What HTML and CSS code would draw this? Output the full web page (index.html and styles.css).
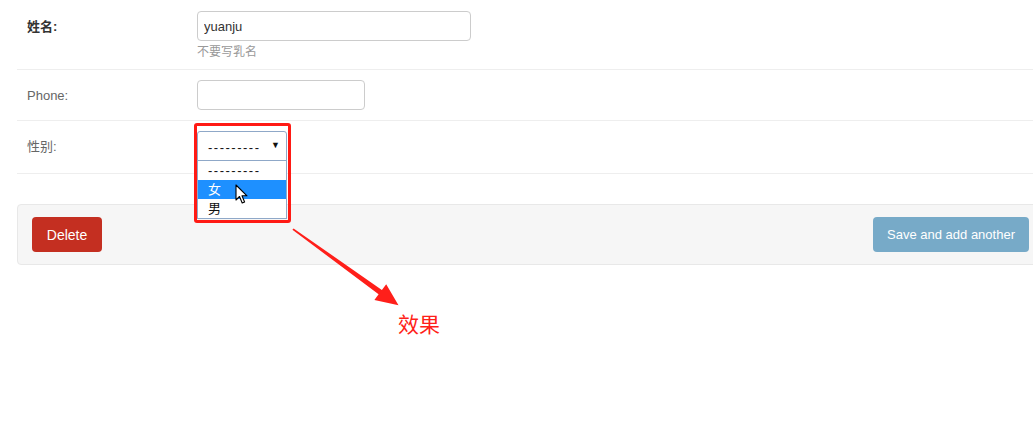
FILE: index.html
```html
<!DOCTYPE html>
<html lang="zh">
<head>
<meta charset="utf-8">
<title>Form</title>
<link rel="stylesheet" href="styles.css">
</head>
<body>
<div class="page">
  <form class="form">
    <div class="row row-first">
      <label class="label label-strong">姓名:</label>
      <div class="field">
        <input class="input input-wide" type="text" value="yuanju">
        <div class="help">不要写乳名</div>
      </div>
    </div>
    <div class="row">
      <label class="label">Phone:</label>
      <div class="field">
        <input class="input input-short" type="text" value="">
      </div>
    </div>
    <div class="row row-select">
      <label class="label">性别:</label>
      <div class="field">
        <div class="select">
          <div class="select-box">
            <span class="select-value">---------</span>
            <span class="select-caret">▼</span>
          </div>
          <ul class="select-list">
            <li class="option">---------</li>
            <li class="option option-active">女</li>
            <li class="option">男</li>
          </ul>
          <svg class="cursor" width="14" height="21" viewBox="0 0 14 21">
            <path d="M1 1 L1 16 L4.5 12.5 L7.2 19 L9.6 18 L7 11.8 L12 11.8 Z" fill="#fff" stroke="#000" stroke-width="1.1" stroke-linejoin="round"/>
          </svg>
          <div class="mark"></div>
        </div>
      </div>
    </div>
    <div class="submit-row">
      <button type="button" class="btn btn-delete">Delete</button>
      <button type="button" class="btn btn-save">Save and add another</button>
    </div>
  </form>
  <svg class="arrow" width="140" height="100" viewBox="280 220 140 100">
    <polygon points="293.6,228.4 381.9,290.0 386.2,284.2 398.5,305.2 374.4,300.0 378.6,294.2 292.4,229.8" fill="#ff1f1a"/>
  </svg>
  <div class="note">效果</div>
</div>
</body>
</html>
```

FILE: styles.css
```css
html, body {
  margin: 0;
  padding: 0;
  overflow: hidden;
  background: #fff;
}

body {
  font-family: "Liberation Sans", "Noto Sans CJK SC", sans-serif;
  font-size: 13px;
  color: #333;
}

.page {
  position: relative;
  width: 1033px;
  height: 423px;
}

.form {
  margin-left: 17px;
  width: 1027px;
}

.row {
  display: flex;
  align-items: flex-start;
  padding: 10px 10px 10px 10px;
  border-bottom: 1px solid #eee;
}

.row-first {
  padding-top: 11px;
  padding-bottom: 9px;
}

.row-select {
  padding-bottom: 12px;
}

.label {
  width: 170px;
  flex: none;
  padding-top: 8px;
  line-height: 16px;
  color: #666;
  font-size: 13px;
}

.label-strong {
  color: #333;
  font-weight: bold;
}

.field {
  display: flex;
  flex-direction: column;
}

.input {
  box-sizing: border-box;
  height: 30px;
  border: 1px solid #ccc;
  border-radius: 4px;
  padding: 0 6px;
  font-family: "Liberation Sans", "Noto Sans CJK SC", sans-serif;
  font-size: 13px;
  color: #333;
  background: #fff;
  margin: 0;
}

.input-wide {
  width: 274px;
}

.input-short {
  width: 168px;
}

.help {
  margin-top: 4px;
  font-size: 12px;
  line-height: 15px;
  color: #999;
}

.select {
  position: relative;
  width: 90px;
  height: 30px;
}

.select-box {
  box-sizing: border-box;
  height: 30px;
  width: 90px;
  border: 1px solid #8fa8c8;
  border-radius: 3px 3px 0 0;
  display: flex;
  align-items: center;
  justify-content: space-between;
  padding: 3px 6px 0 10px;
  background: #fff;
  color: #111;
}

.select-value {
  font-size: 13px;
  letter-spacing: 1.5px;
}

.select-caret {
  font-size: 9px;
  color: #111;
  margin-top: -5px;
}

.select-list {
  position: absolute;
  left: 0;
  top: 29px;
  box-sizing: border-box;
  width: 90px;
  margin: 0;
  padding: 0;
  list-style: none;
  border: 1px solid #8fa8c8;
  background: #fff;
  z-index: 2;
}

.option {
  height: 19px;
  line-height: 19px;
  padding-left: 10px;
  font-size: 13px;
  color: #111;
  letter-spacing: 1.5px;
}

.option-active {
  background: #1e90ff;
  color: #fff;
}

.cursor {
  position: absolute;
  left: 38px;
  top: 53px;
  z-index: 3;
}

.mark {
  position: absolute;
  left: -3px;
  top: -8px;
  width: 91px;
  height: 94px;
  border: 3px solid #ff1a14;
  border-radius: 3px;
  z-index: 4;
}

.submit-row {
  margin-top: 30px;
  box-sizing: border-box;
  height: 61px;
  display: flex;
  justify-content: space-between;
  align-items: flex-start;
  padding: 12px 14px;
  background: #f6f6f6;
  border: 1px solid #e8e8e8;
  border-radius: 4px;
}

.btn {
  box-sizing: border-box;
  height: 35px;
  border: none;
  border-radius: 4px;
  color: #fff;
  font-family: "Liberation Sans", sans-serif;
  font-size: 13px;
  font-weight: normal;
  white-space: nowrap;
  padding: 0;
  margin: 0;
  text-align: center;
}

.btn-delete {
  width: 70px;
  background: #c42f21;
  font-size: 14px;
}

.btn-save {
  width: 156px;
  background: #77aac8;
}

.arrow {
  position: absolute;
  left: 280px;
  top: 220px;
}

.note {
  position: absolute;
  left: 398px;
  top: 309px;
  font-family: "Noto Sans CJK SC", sans-serif;
  font-size: 21px;
  line-height: 28px;
  color: #ff1f1a;
}
```
